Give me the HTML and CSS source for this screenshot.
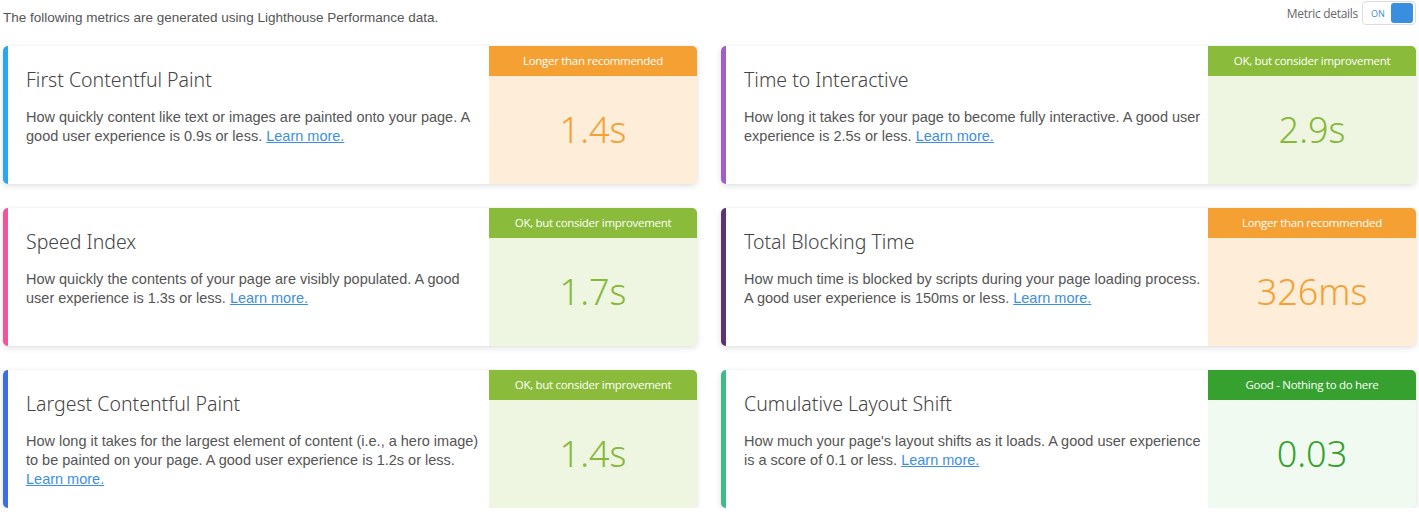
FILE: index.html
```html
<!DOCTYPE html>
<html>
<head>
<meta charset="utf-8">
<link rel="stylesheet" href="styles.css">
</head>
<body>
<div class="page">
  <div class="topbar">
    <p class="intro">The following metrics are generated using Lighthouse Performance data.</p>
    <div class="details">
      <span class="details-label">Metric details</span>
      <span class="toggle"><span class="toggle-on">ON</span><span class="toggle-knob"></span></span>
    </div>
  </div>
  <div class="grid">
    <div class="card c-fcp">
      <div class="info">
        <h3 class="title">First Contentful Paint</h3>
        <p class="desc">How quickly content like text or images are painted onto your page. A good user experience is 0.9s or less. <a href="#">Learn more.</a></p>
      </div>
      <div class="status warn">
        <div class="badge">Longer than recommended</div>
        <div class="value">1.4s</div>
      </div>
    </div>
    <div class="card c-tti">
      <div class="info">
        <h3 class="title">Time to Interactive</h3>
        <p class="desc">How long it takes for your page to become fully interactive. A good user experience is 2.5s or less. <a href="#">Learn more.</a></p>
      </div>
      <div class="status ok">
        <div class="badge">OK, but consider improvement</div>
        <div class="value">2.9s</div>
      </div>
    </div>
    <div class="card c-si">
      <div class="info">
        <h3 class="title">Speed Index</h3>
        <p class="desc">How quickly the contents of your page are visibly populated. A good user experience is 1.3s or less. <a href="#">Learn more.</a></p>
      </div>
      <div class="status ok">
        <div class="badge">OK, but consider improvement</div>
        <div class="value">1.7s</div>
      </div>
    </div>
    <div class="card c-tbt">
      <div class="info">
        <h3 class="title">Total Blocking Time</h3>
        <p class="desc">How much time is blocked by scripts during your page loading process. A good user experience is 150ms or less. <a href="#">Learn more.</a></p>
      </div>
      <div class="status warn">
        <div class="badge">Longer than recommended</div>
        <div class="value">326ms</div>
      </div>
    </div>
    <div class="card c-lcp">
      <div class="info">
        <h3 class="title">Largest Contentful Paint</h3>
        <p class="desc">How long it takes for the largest element of content (i.e., a hero image) to be painted on your page. A good user experience is 1.2s or less. <a href="#">Learn more.</a></p>
      </div>
      <div class="status ok">
        <div class="badge">OK, but consider improvement</div>
        <div class="value">1.4s</div>
      </div>
    </div>
    <div class="card c-cls">
      <div class="info">
        <h3 class="title">Cumulative Layout Shift</h3>
        <p class="desc">How much your page's layout shifts as it loads. A good user experience is a score of 0.1 or less. <a href="#">Learn more.</a></p>
      </div>
      <div class="status good">
        <div class="badge">Good - Nothing to do here</div>
        <div class="value">0.03</div>
      </div>
    </div>
  </div>
</div>
</body>
</html>
```
FILE: styles.css
```css
* { box-sizing: border-box; }
html, body { margin: 0; padding: 0; background: #fff; }
body { font-family: "Liberation Sans", Arial, sans-serif; color: #555; }

.page { padding: 0 3px 0 3px; }

.topbar {
  display: flex;
  justify-content: space-between;
  align-items: flex-start;
  height: 46px;
}
.intro {
  margin: 10px 0 0 0;
  font-size: 13.5px;
  color: #555;
}
.details {
  display: flex;
  align-items: center;
  gap: 4px;
  margin-top: 1px;
}
.details-label {
  font-family: "Open Sans", sans-serif;
  font-size: 12px;
  color: #666;
  letter-spacing: -0.3px;
}
.toggle {
  display: flex;
  align-items: center;
  justify-content: space-between;
  width: 54px;
  height: 24px;
  border: 1px solid #ddd;
  border-radius: 4px;
  padding: 0 2px 0 8px;
  background: #fff;
}
.toggle-on {
  font-family: "Open Sans", sans-serif;
  font-size: 9px;
  color: #3a8ee0;
}
.toggle-knob {
  width: 22px;
  height: 20px;
  background: #3a8ee0;
  border-radius: 3px;
}

.grid {
  display: grid;
  grid-template-columns: 694px 695px;
  column-gap: 24px;
  row-gap: 24px;
  grid-auto-rows: 138px;
}

.card {
  display: flex;
  border-left: 5px solid #29a8f0;
  border-radius: 5px;
  background: #fff;
  box-shadow: 0 2px 6px rgba(0,0,0,0.12), 0 0 2px rgba(0,0,0,0.05);
  overflow: hidden;
}
.c-fcp { border-left-color: #2aa6f2; }
.c-tti { border-left-color: #a160c9; }
.c-si { border-left-color: #f0559a; }
.c-tbt { border-left-color: #5e3470; }
.c-lcp { border-left-color: #3b6fe2; }
.c-cls { border-left-color: #3fba88; }

.info {
  flex: 1;
  padding: 21px 6px 0 18px;
}
.title {
  margin: 0;
  font-family: "Noto Sans", sans-serif;
  font-weight: 300;
  font-size: 19.5px;
  color: #444;
  line-height: 26px;
}
.desc {
  margin: 15px 0 0 0;
  font-size: 14.5px;
  line-height: 19px;
  color: #555;
}
.desc a { color: #3d8fe3; text-decoration: underline; }

.status {
  width: 208px;
  flex: none;
  display: flex;
  flex-direction: column;
}
.badge {
  height: 30px;
  line-height: 30px;
  text-align: center;
  color: #fff;
  font-family: "Open Sans", sans-serif;
  font-size: 11.5px;
  letter-spacing: -0.3px;
}
.value {
  flex: 1;
  display: flex;
  align-items: center;
  justify-content: center;
  font-family: "Noto Sans", sans-serif;
  font-weight: 300;
  font-size: 36px;
  padding-bottom: 2px;
}
.warn { background: #feedd8; }
.warn .badge { background: #f4a033; }
.warn .value { color: #f4a033; }
.ok { background: #eef5e1; }
.ok .badge { background: #8bbb3a; }
.ok .value { color: #86b83a; }
.good { background: #f1faf0; }
.good .badge { background: #36a12e; }
.good .value { color: #36a12e; }
```
